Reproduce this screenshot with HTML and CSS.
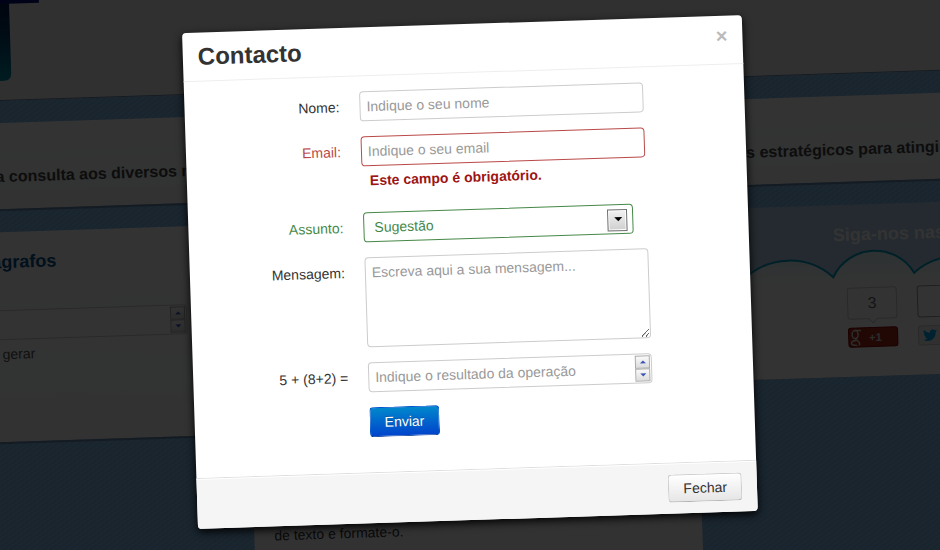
FILE: index.html
```
<!DOCTYPE html>
<html lang="pt">
<head>
    <meta charset="UTF-8">
    <meta name="viewport" content="width=device-width, initial-scale=1.0">
    <title>Contacto</title>
    <link rel="stylesheet" href="styles.css">
</head>
<body>

    <div class="scene">
        <div class="page">
            <header class="topo">
                <svg class="logo" width="60" height="106" viewBox="0 0 60 106">
                    <defs>
                        <linearGradient id="haste" x1="0" y1="0" x2="0" y2="1">
                            <stop offset="0.2" stop-color="#001e50"/>
                            <stop offset="0.6" stop-color="#005078"/>
                            <stop offset="1" stop-color="#0091a5"/>
                        </linearGradient>
                    </defs>
                    <path d="M0 20H30V98Q30 106 22 106H0Z" fill="url(#haste)"/>
                    <path d="M0 0H60V29H0Z" fill="#000f78"/>
                </svg>
            </header>

            <div class="intro">
                <span>a consulta aos diversos re</span>
                <span>s estratégicos para atingir</span>
            </div>

            <div class="colunas">
                <section class="card card-gerar">
                    <h2>parágrafos</h2>
                    <div class="spin">
                        <input type="text" aria-label="Parágrafos">
                        <div class="spin-btns">
                            <button type="button" class="up" aria-label="Mais"></button>
                            <button type="button" class="down" aria-label="Menos"></button>
                        </div>
                    </div>
                    <p>gerar</p>
                </section>

                <section class="card card-texto">
                    <p>de texto e formate-o.</p>
                </section>

                <section class="card card-redes">
                    <svg class="nuvens" width="448" height="172" viewBox="0 0 448 172">
                        <defs>
                            <linearGradient id="brilho" x1="0" y1="0" x2="0" y2="1">
                                <stop offset="0" stop-color="#dff6fa"/>
                                <stop offset="0.25" stop-color="#fff"/>
                            </linearGradient>
                        </defs>
                        <path d="M-60 72A65 65 0 0 1 27 72A65 65 0 0 1 117 72A46 46 0 0 1 198 70A64 64 0 0 1 280 70A50 50 0 0 1 360 72A65 65 0 0 1 450 72V174H-60Z" fill="url(#brilho)" stroke="#00a0c8" stroke-width="2"/>
                    </svg>
                    <h2>Siga-nos nas redes sociais</h2>
                    <div class="botoes">
                        <div class="social">
                            <div class="contador seta">3</div>
                            <button type="button" class="gplus">
                                <svg width="12" height="18" viewBox="0 0 12 18" fill="none" stroke="#ddd" stroke-width="1.500">
                                    <ellipse cx="5" cy="6" rx="3" ry="4"/>
                                    <path d="M5 2H11M7 9Q4 11 7 12Q10 14 9 17"/>
                                    <path d="M6 12Q1 12 1 15Q2 17 7 17"/>
                                </svg>
                                <span>+1</span>
                            </button>
                        </div>
                        <div class="social social-tw">
                            <div class="contador"></div>
                            <button type="button" class="tweet">
                                <svg width="14" height="12" viewBox="0 0 24 20">
                                    <path fill="#00aced" d="M24 2.4a10 10 0 0 1-2.8.8A5 5 0 0 0 23.300.5a10 10 0 0 1-3.100 1.200A4.900 4.900 0 0 0 11.800 6.200 14 14 0 0 1 1.700 1a5 5 0 0 0 1.500 6.600 5 5 0 0 1-2.200-.6 5 5 0 0 0 3.900 4.900 5 5 0 0 1-2.200.1 5 5 0 0 0 4.600 3.400A10 10 0 0 1 0 17.500 14 14 0 0 0 21.500 5a10 10 0 0 0 2.500-2.600z"/>
                                </svg>
                                <span>Seguir</span>
                            </button>
                        </div>
                    </div>
                </section>
            </div>
        </div>

        <div class="backdrop"></div>

        <div class="modal" role="dialog" aria-labelledby="titulo">
            <div class="modal-header">
                <h3 id="titulo">Contacto</h3>
                <button type="button" class="close" aria-label="Fechar janela">×</button>
            </div>

            <form class="modal-body">
                <div class="group">
                    <label for="nome">Nome:</label>
                    <input type="text" id="nome" placeholder="Indique o seu nome">
                </div>
                <div class="group error">
                    <label for="email">Email:</label>
                    <div class="controls">
                        <input type="text" id="email" placeholder="Indique o seu email">
                        <span class="help">Este campo é obrigatório.</span>
                    </div>
                </div>
                <div class="group success">
                    <label for="assunto">Assunto:</label>
                    <div class="select">
                        <select id="assunto">
                            <option>Sugestão</option>
                        </select>
                    </div>
                </div>
                <div class="group">
                    <label for="mensagem">Mensagem:</label>
                    <textarea id="mensagem" placeholder="Escreva aqui a sua mensagem..."></textarea>
                </div>
                <div class="group">
                    <label for="soma">5 + (8+2) =</label>
                    <div class="spin">
                        <input type="text" id="soma" placeholder="Indique o resultado da operação">
                        <div class="spin-btns">
                            <button type="button" class="up" aria-label="Mais"></button>
                            <button type="button" class="down" aria-label="Menos"></button>
                        </div>
                    </div>
                </div>
                <div class="group">
                    <span></span>
                    <button type="button" class="btn btn-primary">Enviar</button>
                </div>
            </form>

            <div class="modal-footer">
                <button type="button" class="btn">Fechar</button>
            </div>
        </div>
    </div>

</body>
</html>
```
FILE: styles.css
```
* {
    box-sizing: border-box;
}

body {
    margin: 0;
    height: 100vh;
    overflow: hidden;
    position: relative;
    background-color: #1a2631;
    color: #333;
    font-family: "Liberation Sans", Arial, sans-serif;
    font-size: 14px;
    line-height: 20px;
}

h2, h3, p {
    margin: 0;
}

input, select, textarea, button {
    font-family: inherit;
    font-size: 14px;
    line-height: 20px;
    margin: 0;
}

/* a cena inteira fica inclinada */
.scene {
    position: absolute;
    top: 0;
    left: 0;
    width: 100%;
    height: 100%;
    transform: rotate(-1.85deg);
}

.page, .backdrop {
    position: absolute;
    top: -40px;
    bottom: -40px;
    left: -250px;
    right: -250px;
}

.page {
    overflow: hidden;
    background: repeating-linear-gradient(-35deg, #84bcee 0, #84bcee 2px, #7cb2e2 2px, #7cb2e2 4px);
}

.backdrop {
    background-color: rgba(0, 0, 0, 0.8);
}

/* Página de fundo */
.topo {
    height: 126px;
    padding-left: 238px;
    background-color: #f0f0f0;
    border-bottom: 1px solid #6488a8;
}

.logo {
    display: block;
}

.intro {
    display: grid;
    grid-template-columns: 1fr 440px;
    align-items: end;
    height: 88px;
    margin-top: 22px;
    padding: 0 0 22px 249px;
    background: linear-gradient(#fff, #fafffb 50%, #f8f9ff);
    border-bottom: 2px solid #6488a8;
    color: #444;
    font-size: 16px;
    font-weight: bold;
    white-space: nowrap;
}

.colunas {
    display: grid;
    grid-template-columns: repeat(3, 448px);
    column-gap: 22px;
    justify-content: center;
    align-items: start;
    margin-top: 21px;
}

.card {
    background: linear-gradient(#fff, #fafffb 50%, #f8f9ff);
    border-bottom: 2px solid #6488a8;
}

.card h2 {
    font-size: 18px;
    line-height: 20px;
}

.card-gerar {
    height: 212px;
    padding: 20px 38px 0 0;
}

.card-gerar h2 {
    width: 281px;
    margin-bottom: 38px;
    color: #00508c;
    text-align: right;
}

.card-gerar p {
    width: 257px;
    margin-top: 4px;
    color: #555;
    text-align: right;
}

.card-gerar .spin {
    width: auto;
}

.card-texto {
    display: flex;
    flex-direction: column;
    justify-content: flex-end;
    min-height: 380px;
    padding: 0 20px 56px;
}

.card-redes {
    position: relative;
    height: 172px;
    padding: 20px 0 0 118px;
    background: linear-gradient(#b4d2eb, #b4d2f0);
}

.card-redes h2 {
    position: relative;
    color: #fff;
}

.nuvens {
    position: absolute;
    top: 0;
    left: 0;
}

.botoes {
    position: relative;
    display: flex;
    gap: 20px;
    margin-top: 43px;
    padding-left: 12px;
}

.social {
    width: 50px;
}

.social-tw {
    width: 80px;
}

.contador {
    position: relative;
    height: 32px;
    margin-bottom: 8px;
    background-color: #fff;
    border: 1px solid #ccc;
    border-radius: 3px;
    color: #666;
    font-size: 16px;
    line-height: 30px;
    text-align: center;
}

.seta::after {
    content: "";
    position: absolute;
    bottom: -4px;
    left: 21px;
    width: 6px;
    height: 6px;
    border: solid #ccc;
    border-width: 0 1px 1px 0;
    background-color: #fff;
    transform: rotate(45deg);
}

.social-tw .contador {
    border-color: #999;
}

.gplus, .tweet {
    display: flex;
    align-items: center;
    width: 100%;
    height: 20px;
    padding: 0 1px;
    border: 1px solid #820000;
    border-radius: 3px;
    background-color: #aa2814;
    color: #ddd;
    font-size: 11px;
    font-weight: bold;
}

.gplus span {
    margin-left: 7px;
}

.tweet {
    gap: 4px;
    padding: 0 4px;
    background-color: #f0f0f0;
    border-color: #ccc;
    color: #333;
}

/* Janela */
.modal {
    position: absolute;
    top: 24px;
    left: 50%;
    width: 560px;
    margin-left: -280px;
    background-color: #fff;
    border-radius: 4px;
    box-shadow: 0 3px 8px #000;
}

.modal-header {
    display: flex;
    justify-content: space-between;
    align-items: flex-start;
    padding: 9px 15px;
    border-bottom: 1px solid #eee;
}

.modal-header h3 {
    font-size: 24px;
    line-height: 30px;
}

.close {
    padding: 1px 0 0;
    border: none;
    background: none;
    color: #bbb;
    font-size: 20px;
    font-weight: bold;
}

.modal-body {
    display: flex;
    flex-direction: column;
    gap: 15px;
    padding: 15px 15px 35px;
}

.group {
    display: grid;
    grid-template-columns: 140px 284px;
    column-gap: 20px;
    align-items: start;
}

.group label {
    padding-top: 5px;
    text-align: right;
}

input, select, textarea {
    display: block;
    width: 100%;
    height: 30px;
    padding: 4px 6px;
    background-color: #fff;
    border: 1px solid #ccc;
    border-radius: 4px;
    color: #555;
}

textarea {
    height: 90px;
}

::placeholder {
    color: #999;
    opacity: 1;
}

.help {
    display: block;
    padding: 4px 8px 7px;
    color: #9d1414;
    font-weight: bold;
}

.error label {
    color: #b94a48;
}

.error input {
    border-color: #b94a48;
}

.success label {
    color: #468847;
}

.select {
    position: relative;
    width: 270px;
}

.select select {
    appearance: none;
    padding: 4px 10px;
    border-color: #468847;
    color: #468847;
}

.select::before {
    content: "";
    position: absolute;
    top: 5px;
    right: 6px;
    width: 18px;
    height: 20px;
    border: 1px solid #707070;
    box-shadow: inset 0 0 0 1px #fff;
    background: linear-gradient(#f2f2f2, #cfcfcf);
    pointer-events: none;
}

.select::after {
    content: "";
    position: absolute;
    top: 13px;
    right: 11px;
    border: 4px solid transparent;
    border-top-color: #000;
    border-bottom: none;
    pointer-events: none;
}

.spin {
    position: relative;
}

.spin-btns {
    position: absolute;
    top: 2px;
    right: 2px;
    display: flex;
    flex-direction: column;
    width: 15px;
}

.spin-btns button {
    display: flex;
    align-items: center;
    justify-content: center;
    height: 13px;
    padding: 0;
    border: 1px solid #aaa;
    background: linear-gradient(#fafafa, #dcdcdc);
}

.spin-btns button::after {
    content: "";
    border: 3px solid transparent;
}

.spin-btns .up::after {
    border-top: none;
    border-bottom-color: #3a52b8;
}

.spin-btns .down::after {
    border-bottom: none;
    border-top-color: #3a52b8;
}

.btn {
    justify-self: start;
    height: 28px;
    padding: 3px 14px;
    border: 1px solid #ccc;
    border-bottom-color: #b3b3b3;
    border-radius: 4px;
    background: linear-gradient(#fff, #e6e6e6);
    color: #333;
}

.btn-primary {
    height: 30px;
    border-color: #0055cc #0055cc #003a9a;
    background: linear-gradient(#0088cc, #0044cc);
    color: #fff;
    text-shadow: 0 -1px 0 rgba(0, 0, 0, 0.25);
}

.modal-footer {
    display: flex;
    justify-content: flex-end;
    padding: 11px 15px;
    background-color: #f5f5f5;
    border-top: 1px solid #ddd;
    border-radius: 0 0 4px 4px;
    box-shadow: inset 0 1px 0 #fff;
}
```
